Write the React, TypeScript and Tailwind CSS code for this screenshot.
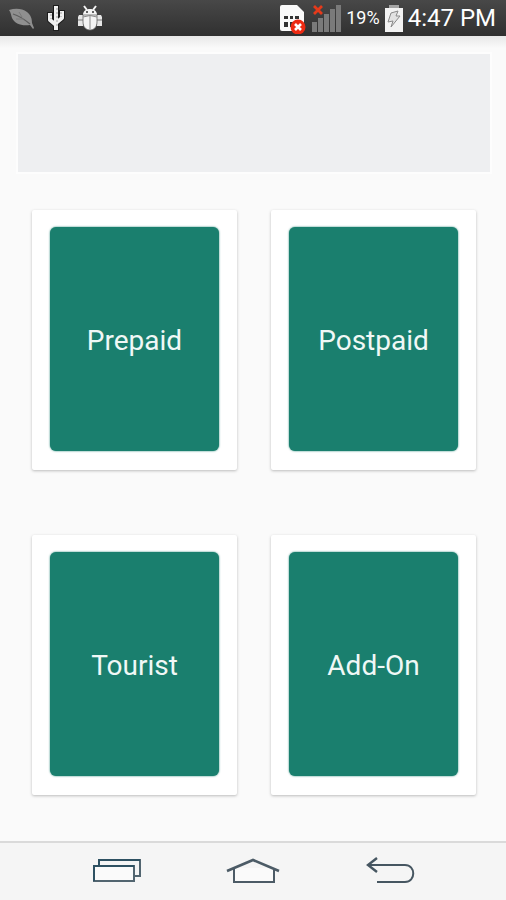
const plans = ["Prepaid", "Postpaid", "Tourist", "Add-On"]

function LeafIcon() {
  return (
    <svg className="h-7 w-7" viewBox="0 0 28 28" aria-hidden="true">
      <path d="M1 6c6-2 13-2 18 2 4 3 5 7 5 11l2 5-1 1-3-4C13 22 7 20 4 14 3 11 3 9 1 6z" fill="#8f8f8f" />
      <path d="M5 10c7 2 11 5 17 10" fill="none" stroke="#5c5c5c" strokeWidth="1.2" />
      <path d="M11 8l3 5M8 15l8 0" fill="none" stroke="#7a7a7a" />
    </svg>
  )
}

function CactusIcon() {
  return (
    <svg className="h-7 w-5" viewBox="0 0 20 28" fill="none" strokeLinejoin="round" aria-hidden="true">
      <path d="M10 1v26M4 8v8l6 5M16 6v8l-6 5" stroke="#1c1c1c" strokeWidth="6" />
      <path d="M10 2v24M4 9v7l6 5M16 7v7l-6 5" stroke="#efefef" strokeWidth="4" />
      <path d="M11 4v20M5 10v5M15 8v5" stroke="#a0a0a0" strokeDasharray="2 2" />
    </svg>
  )
}

function BugIcon() {
  return (
    <svg className="h-7 w-7" viewBox="0 0 28 28" aria-hidden="true">
      <path d="M8 2l3 4M20 2l-3 4" stroke="#f4f4f4" strokeWidth="2" />
      <path d="M7 11c0-4 3-6 7-6s7 2 7 6z" fill="#f4f4f4" />
      <circle cx="11" cy="8" r="1" fill="#333" />
      <circle cx="17" cy="8" r="1" fill="#333" />
      <path d="M3 11h4v11H2v-9zM21 11h4l1 2v9h-5z" fill="#e6e6e6" />
      <path d="M2 16h5M21 16h5" stroke="#777" />
      <path d="M7 11h14v7c0 5-3 8-7 8s-7-3-7-8z" fill="#f4f4f4" stroke="#666" strokeWidth="0.8" />
      <path d="M7 13q7-3 14 0M14 12v13" fill="none" stroke="#8a8a8a" />
    </svg>
  )
}

function SimIcon() {
  return (
    <svg className="h-8 w-7" viewBox="0 0 28 32" aria-hidden="true">
      <path d="M2 3h15l7 7v19H2q-2 0-2-2V5q0-2 2-2z" fill="#fafafa" />
      <path d="M4 14h4v3H4zM10 14h3v3h-3zM15 14h4v3h-4zM4 20h4v5H4zM10 20h3v5h-3z" fill="#333" />
      <circle cx="18" cy="25" r="7.5" fill="#ed2a12" />
      <path d="M15 22l6 6M21 22l-6 6" stroke="#fff" strokeWidth="2.6" />
    </svg>
  )
}

function SignalIcon() {
  return (
    <svg className="h-8 w-[30px]" viewBox="0 0 30 32" aria-hidden="true">
      <path d="M0 20h5v10H0zM6 16h5v14H6zM12 12h5v18h-5zM18 7h5v23h-5zM24 3h5v27h-5z" fill="#7a7a7a" />
      <path d="M2 4l8 8M10 4l-8 8" stroke="#e63a1b" strokeWidth="2.8" />
    </svg>
  )
}

function BatteryIcon() {
  return (
    <svg className="h-8 w-5" viewBox="0 0 20 32" aria-hidden="true">
      <path d="M1 6h18v24H1z" fill="#f2f2f2" />
      <path d="M5 3h10v3H5z" fill="#a5a5a5" />
      <path d="M7 11l7-2-2 5h4l-9 11 2-6-5 1z" fill="#e2e2e2" stroke="#8a8a8a" />
    </svg>
  )
}

function StatusBar() {
  return (
    <header className="flex h-9 items-center justify-between bg-gradient-to-b from-[#484848] to-[#303030] pr-[10px] pl-2 text-white">
      <div className="flex items-center gap-[10px]">
        <LeafIcon />
        <CactusIcon />
        <BugIcon />
      </div>
      <div className="flex items-center gap-1">
        <SimIcon />
        <SignalIcon />
        <span className="text-lg">19%</span>
        <BatteryIcon />
        <time className="text-2xl">4:47 PM</time>
      </div>
    </header>
  )
}

function NavBar() {
  return (
    <nav className="flex h-[59px] items-center justify-center gap-[85px] border-t-2 border-[#dadada] bg-[#f5f5f5]">
      <button type="button" aria-label="Recent apps">
        <svg className="h-8 w-[50px]" viewBox="0 0 50 32" fill="none" stroke="#526570" strokeWidth="2">
          <path d="M8 10V4h41v16h-6" />
          <path d="M3 10h40v15H3z" fill="#fafafa" />
          <path d="M8 10V4h41M3 25V10h40" stroke="#2e5162" />
        </svg>
      </button>
      <button type="button" aria-label="Home">
        <svg className="h-8 w-[54px]" viewBox="0 0 54 32" fill="none" stroke="#4c5b66" strokeWidth="2">
          <path d="M8 12v14h40V12" fill="#fafafa" />
          <path d="M1 15L27 4l26 11" strokeWidth="2.6" />
        </svg>
      </button>
      <button type="button" aria-label="Back">
        <svg className="h-8 w-[50px]" viewBox="0 0 50 32" fill="none" stroke="#465661" strokeWidth="2">
          <path d="M4 9h36c11 0 11 17 0 17H12" />
          <path d="M12 2L3 9l9 7" strokeWidth="2.4" />
        </svg>
      </button>
    </nav>
  )
}

export default function App() {
  return (
    <div className="flex min-h-screen flex-col bg-[#fafafa] font-['Roboto',sans-serif]">
      <StatusBar />
      <main className="flex-1 bg-[linear-gradient(#e8e8e8,#fafafa_12px)] pt-4 pb-8">
        <div className="mr-[14px] ml-4 h-[122px] border-2 border-[#fdfdfd] bg-[#eeeff1]" />
        <div className="mt-9 grid grid-cols-2 gap-x-[34px] gap-y-[65px] pr-[30px] pl-8">
          {plans.map((plan) => (
            <div key={plan} className="rounded-xs bg-white px-[18px] pt-[17px] pb-[19px] shadow-[0_1px_3px_rgba(0,0,0,0.25)]">
              <button
                type="button"
                className="h-56 w-full rounded-md bg-[#1a7f6e] pt-1 text-[28px] text-[#f0f8f6] shadow-[0_0_2px_#1a7f6e]"
              >
                {plan}
              </button>
            </div>
          ))}
        </div>
      </main>
      <NavBar />
    </div>
  )
}
